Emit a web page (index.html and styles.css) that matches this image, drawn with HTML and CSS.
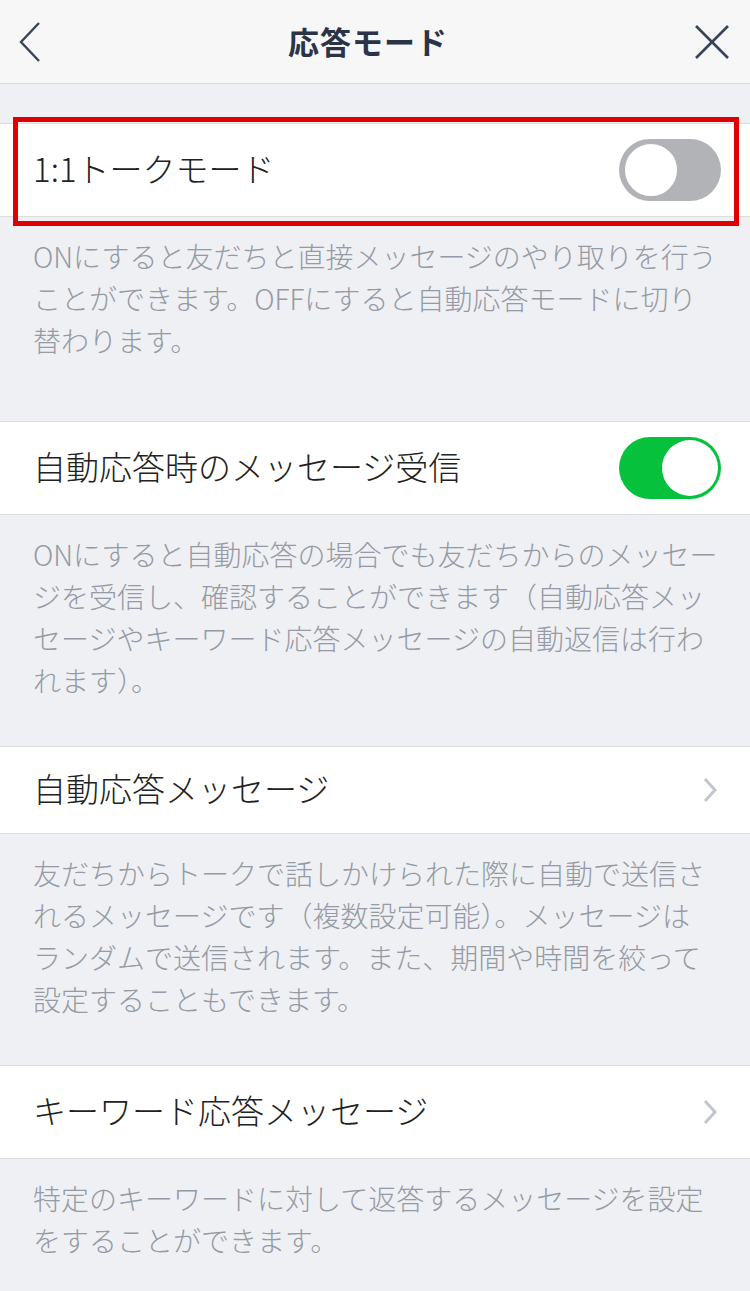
FILE: index.html
```html
<!DOCTYPE html>
<html lang="ja">
<head>
  <meta charset="UTF-8" />
  <meta name="viewport" content="width=device-width, initial-scale=1.0" />
  <title>応答モード</title>
  <link rel="stylesheet" href="styles.css">
</head>
<body>

  <header class="nav">
    <svg class="nav-back" width="24" height="42" viewBox="0 0 24 42">
      <polyline points="21,2 3,21 21,40" fill="none" stroke="#3a4458" stroke-width="2.4" />
    </svg>
    <h1 class="nav-title">応答モード</h1>
    <svg class="nav-close" width="36" height="36" viewBox="0 0 36 36">
      <line x1="2" y1="2" x2="34" y2="34" stroke="#3a4458" stroke-width="2.6" />
      <line x1="34" y1="2" x2="2" y2="34" stroke="#3a4458" stroke-width="2.6" />
    </svg>
  </header>

  <main class="settings">
    <section class="group first">
      <div class="row-wrap">
        <div class="row">
          <span class="label">1:1トークモード</span>
          <span class="switch off"><span class="knob"></span></span>
        </div>
        <span class="mark"></span>
      </div>
      <p class="note">ONにすると友だちと直接メッセージのやり取りを行う<br>ことができます。OFFにすると自動応答モードに切り<br>替わります。</p>
    </section>

    <section class="group">
      <div class="row">
        <span class="label">自動応答時のメッセージ受信</span>
        <span class="switch on"><span class="knob"></span></span>
      </div>
      <p class="note">ONにすると自動応答の場合でも友だちからのメッセー<br>ジを受信し、確認することができます（自動応答メッ<br>セージやキーワード応答メッセージの自動返信は行わ<br>れます）。</p>
    </section>

    <section class="group">
      <div class="row short">
        <span class="label">自動応答メッセージ</span>
        <svg class="chevron" width="16" height="26" viewBox="0 0 16 26">
          <polyline points="3,2 13,13 3,24" fill="none" stroke="#c3c6cf" stroke-width="3" />
        </svg>
      </div>
      <p class="note">友だちからトークで話しかけられた際に自動で送信さ<br>れるメッセージです（複数設定可能）。メッセージは<br>ランダムで送信されます。また、期間や時間を絞って<br>設定することもできます。</p>
    </section>

    <section class="group">
      <div class="row">
        <span class="label">キーワード応答メッセージ</span>
        <svg class="chevron" width="16" height="26" viewBox="0 0 16 26">
          <polyline points="3,2 13,13 3,24" fill="none" stroke="#c3c6cf" stroke-width="3" />
        </svg>
      </div>
      <p class="note">特定のキーワードに対して返答するメッセージを設定<br>をすることができます。</p>
    </section>
  </main>

</body>
</html>
```

FILE: styles.css
```css
body {
  margin: 0;
  background-color: #eff0f4;
  font-family: "Noto Sans CJK JP", "Noto Sans", sans-serif;
  color: #222;
}
.nav {
  height: 84px;
  background-color: #f7f7f8;
  border-bottom: 1px solid #d9d9dd;
  box-sizing: border-box;
  display: flex;
  align-items: center;
  justify-content: space-between;
  padding: 0 20px 0 18px;
}
.nav-title {
  margin: 0 0 2px;
  font-size: 31px;
  font-weight: 700;
  color: #2b3346;
  letter-spacing: 1px;
}
.settings {
  padding-top: 39px;
}
.group {
  margin-bottom: 45px;
}
.group.first {
  margin-bottom: 60px;
}
.row-wrap {
  position: relative;
}
.row {
  height: 92px;
  background: #fff;
  border-top: 1px solid #dcdde1;
  border-bottom: 1px solid #dcdde1;
  display: flex;
  align-items: center;
  justify-content: space-between;
  padding: 0 30px 0 33px;
}
.row.short {
  height: 86px;
}
.label {
  font-size: 33px;
  font-weight: 300;
  line-height: 40px;
  color: #222;
  margin-bottom: 4px;
}
.mark {
  position: absolute;
  top: -6px;
  left: 13px;
  width: 726px;
  height: 109px;
  box-sizing: border-box;
  border: 5px solid #e00000;
}
.note {
  margin: 0;
  padding: 18px 33px 0;
  font-size: 28px;
  font-weight: 300;
  line-height: 42px;
  color: #959aa4;
  white-space: nowrap;
}
.switch {
  width: 102px;
  height: 62px;
  border-radius: 31px;
  box-sizing: border-box;
  display: flex;
  align-items: center;
}
.switch .knob {
  width: 56px;
  height: 56px;
  border-radius: 50%;
  background: #fff;
}
.switch.off {
  background: #b1b3b7;
  padding: 0 3px;
  margin-right: -1px;
}
.switch.off .knob {
  width: 58px;
  height: 58px;
  box-sizing: border-box;
  border: 3px solid #b1b3b7;
}
.switch.on {
  background: #06c13c;
  justify-content: flex-end;
  padding: 0 3px;
  margin-right: -1px;
}
.chevron {
  margin-right: 2px;
}
```
